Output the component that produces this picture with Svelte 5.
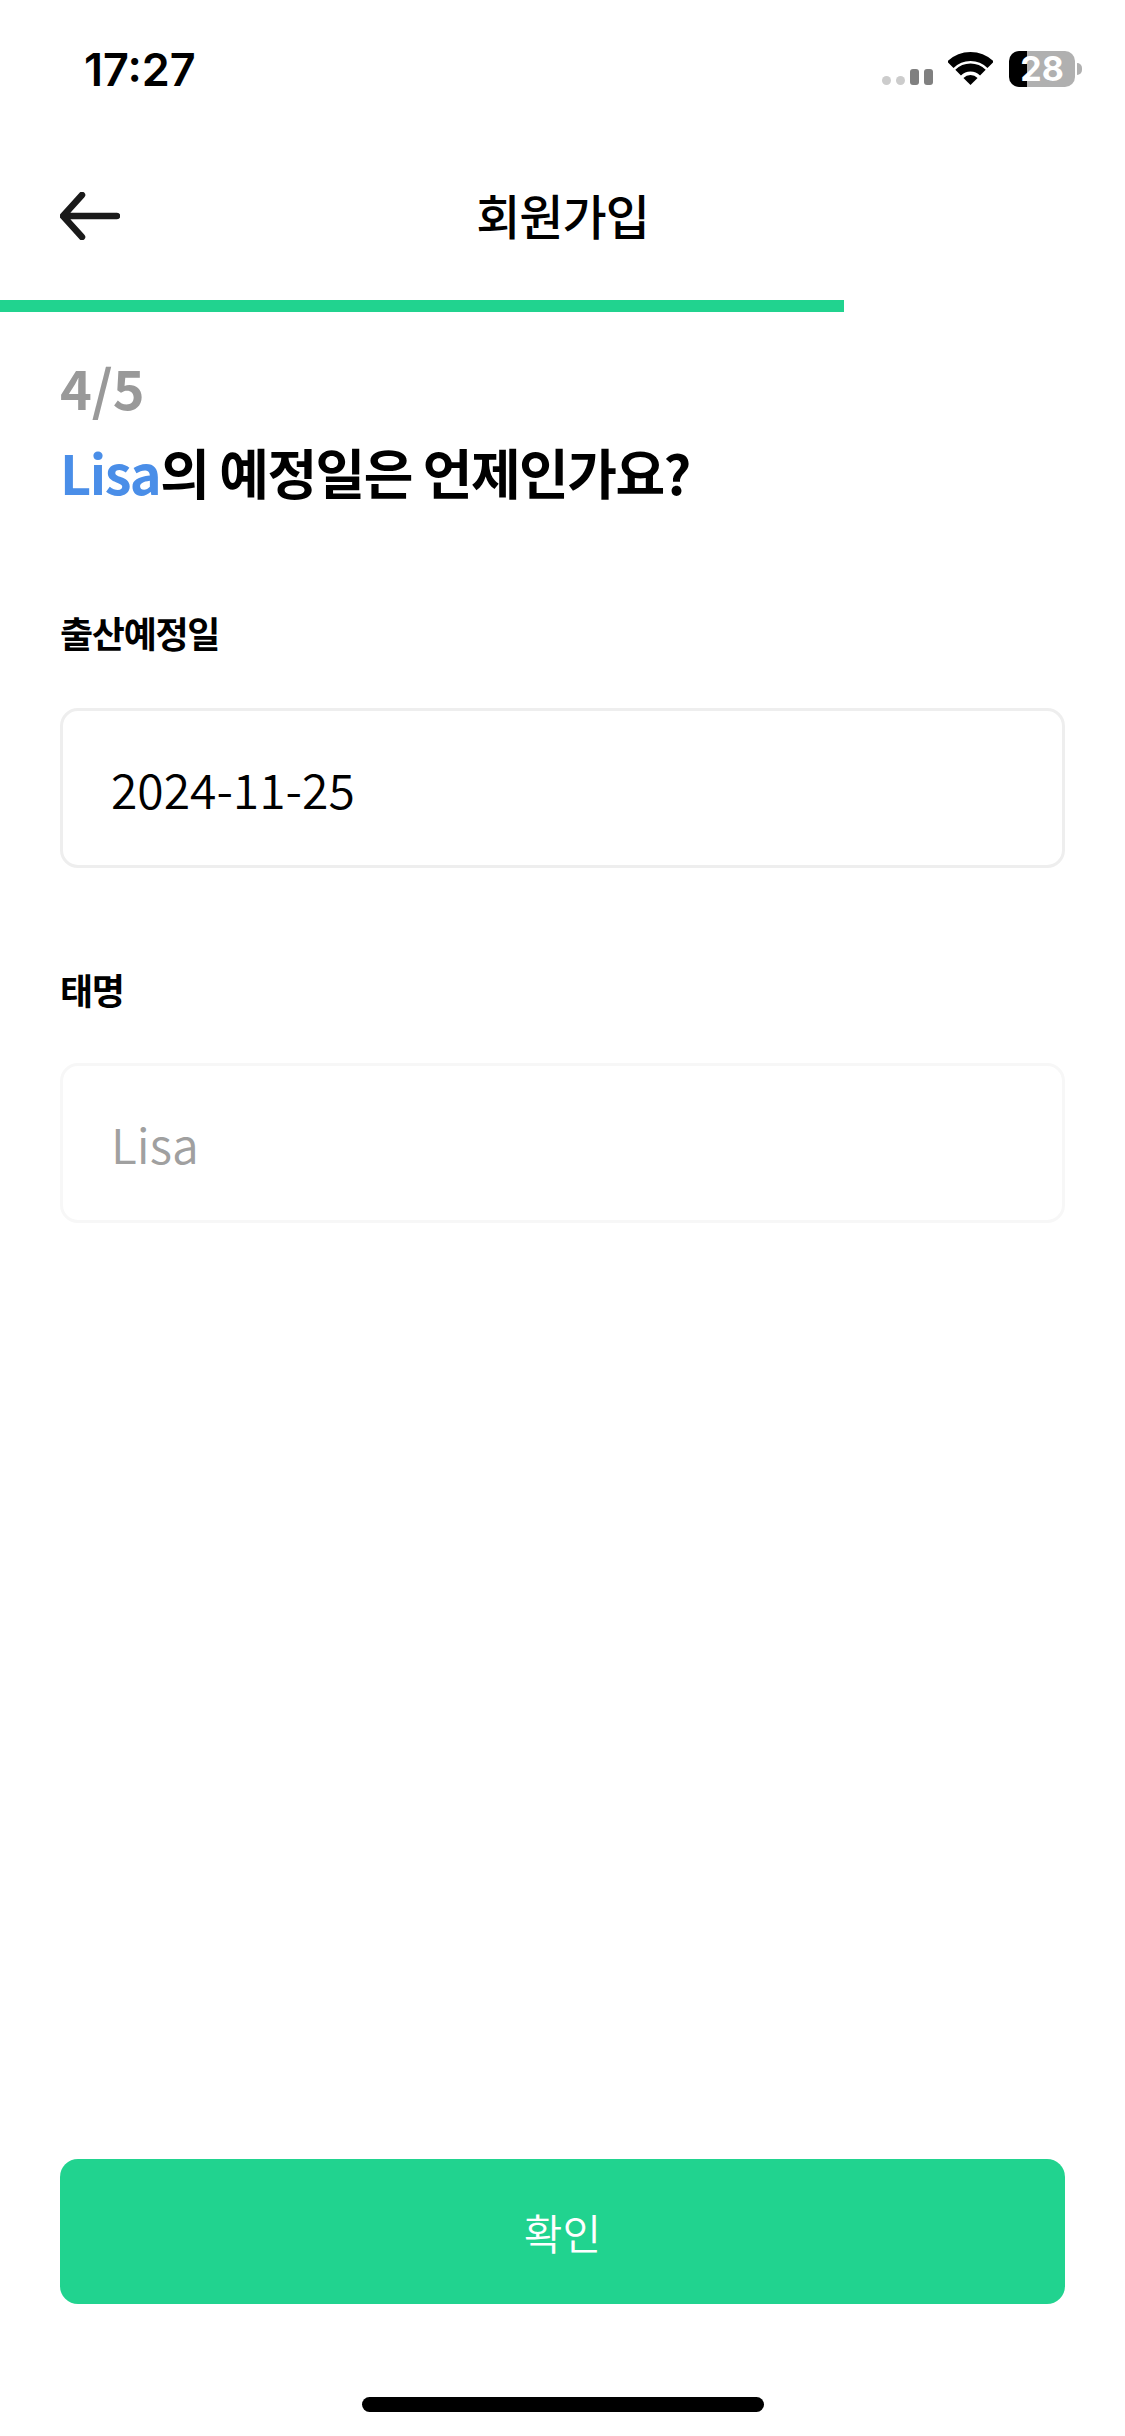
<script>
	let dueDate = '2024-11-25';
	let babyName = 'Lisa';
	let step = 4;
	let total = 5;
</script>

<div class="page">
	<div class="status-bar">
		<span class="time">17:27</span>
		<div class="status-icons">
			<div class="signal">
				<i class="dot"></i>
				<i class="dot"></i>
				<i class="bar"></i>
				<i class="bar"></i>
			</div>
			<svg class="wifi" viewBox="0 0 45 33" width="45" height="33">
				<path d="M2.35 12.85A28.5 28.5 0 0 1 42.65 12.85" fill="none" stroke="#000" stroke-width="9" />
				<path d="M10.13 20.63A17.5 17.5 0 0 1 34.87 20.63" fill="none" stroke="#000" stroke-width="8" />
				<path d="M22.5 33L15.43 25.93A10 10 0 0 1 29.57 25.93Z" fill="#000" />
			</svg>
			<div class="battery">
				<div class="battery-body">28</div>
				<div class="battery-nub"></div>
			</div>
		</div>
	</div>

	<header class="top">
		<button class="back" aria-label="뒤로">
			<svg viewBox="0 0 60 48" width="60" height="48">
				<path d="M3 24H57M22 3L3 24L22 45" fill="none" stroke="#1a1a1a" stroke-width="6.5" stroke-linecap="round" stroke-linejoin="round" />
			</svg>
		</button>
		<h1>회원가입</h1>
	</header>

	<div class="progress"><div class="progress-fill"></div></div>

	<main>
		<p class="step">{step}/{total}</p>
		<h2><span class="name">{babyName}</span>의 예정일은 언제인가요?</h2>

		<label class="field first">
			<span>출산예정일</span>
			<input type="text" value={dueDate} readonly />
		</label>

		<label class="field second">
			<span>태명</span>
			<input class="off" type="text" value={babyName} readonly />
		</label>
	</main>

	<footer>
		<button class="confirm">확인</button>
		<div class="home-bar"></div>
	</footer>
</div>

<style>
	:global(body) {
		background: #fff;
	}
	.page {
		width: 1125px;
		height: 2436px;
		display: flex;
		flex-direction: column;
		font-family: "Noto Sans CJK KR", "Noto Sans", sans-serif;
		color: #000;
		overflow: hidden;
	}
	.status-bar {
		height: 138px;
		display: flex;
		align-items: center;
		justify-content: space-between;
		padding: 0 43px 0 84px;
		box-sizing: border-box;
	}
	.time {
		font-family: Inter, sans-serif;
		font-size: 45px;
		font-weight: 600;
	}
	.status-icons {
		display: flex;
		align-items: flex-end;
		height: 36px;
	}
	.signal {
		display: flex;
		align-items: flex-end;
		gap: 5px;
		margin-right: 15px;
		padding-bottom: 2px;
	}
	.dot {
		width: 9px;
		height: 9px;
		border-radius: 50%;
		background: #ccc;
	}
	.bar {
		width: 9px;
		height: 16px;
		border-radius: 3px;
		background: #808080;
	}
	.wifi {
		margin-right: 16px;
		margin-bottom: 2px;
	}
	.battery {
		display: flex;
		align-items: center;
		gap: 2px;
	}
	.battery-body {
		width: 66px;
		height: 36px;
		border-radius: 10px;
		background: linear-gradient(90deg, #000 27%, #b0b0b0 27%);
		color: #fff;
		font-family: Inter, sans-serif;
		font-size: 34px;
		font-weight: 700;
		line-height: 36px;
		text-align: center;
	}
	.battery-nub {
		width: 5px;
		height: 12px;
		border-radius: 0 6px 6px 0;
		background: #b0b0b0;
	}
	.top {
		height: 162px;
		flex-shrink: 0;
		position: relative;
		display: flex;
		align-items: center;
		justify-content: center;
		padding-bottom: 10px;
		box-sizing: border-box;
	}
	.back {
		position: absolute;
		left: 60px;
		top: 54px;
		padding: 0;
		border: none;
		background: none;
		line-height: 0;
	}
	h1 {
		margin: 0;
		font-size: 48px;
		font-weight: 500;
		letter-spacing: -1px;
	}
	.progress {
		height: 12px;
		flex-shrink: 0;
	}
	.progress-fill {
		width: 75%;
		height: 100%;
		background: #21d38f;
	}
	main {
		padding: 29px 60px 0;
		flex: 1;
	}
	.step {
		margin: 0;
		font-size: 54px;
		line-height: 92px;
		font-weight: 700;
		color: #999;
	}
	h2 {
		margin: 0;
		font-size: 54px;
		line-height: 78px;
		font-weight: 700;
		letter-spacing: -1.5px;
	}
	.name {
		color: #4a8ee8;
	}
	.field {
		display: block;
	}
	.field span {
		display: block;
		font-size: 36px;
		line-height: 52px;
		font-weight: 700;
		letter-spacing: -1.3px;
	}
	.first {
		margin-top: 95px;
	}
	.second {
		margin-top: 95px;
	}
	input {
		display: block;
		width: 100%;
		height: 160px;
		margin-top: 50px;
		padding: 0 48px;
		box-sizing: border-box;
		border: 3px solid #eee;
		border-radius: 18px;
		background: #fff;
		font-family: inherit;
		font-size: 48px;
		font-weight: 350;
		color: #000;
		outline: none;
	}
	input.off {
		margin-top: 48px;
		border-color: #f7f7f7;
		color: #a0a0a0;
	}
	footer {
		padding: 0 60px;
		display: flex;
		flex-direction: column;
		align-items: center;
		height: 277px;
		box-sizing: border-box;
	}
	.confirm {
		width: 100%;
		height: 145px;
		flex-shrink: 0;
		border: none;
		border-radius: 18px;
		background: #21d38f;
		color: #fff;
		font-family: inherit;
		font-size: 42px;
		font-weight: 350;
	}
	.home-bar {
		width: 402px;
		height: 15px;
		margin-top: 93px;
		border-radius: 8px;
		background: #000;
	}
</style>
